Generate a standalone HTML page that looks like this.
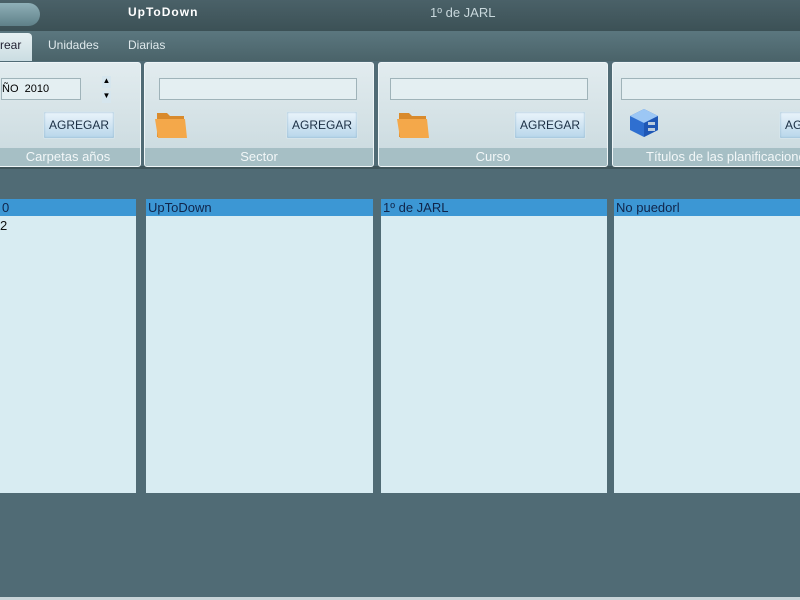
<!DOCTYPE html>
<html><head><meta charset="utf-8"><style>
*{margin:0;padding:0;box-sizing:border-box}
body{width:800px;height:600px;overflow:hidden;background:#506b75;font-family:"Liberation Sans",sans-serif;position:relative}
.a{position:absolute}
.top{left:0;top:0;width:800px;height:31px;background:linear-gradient(#4a6168,#3c5156)}
.pill{left:-20px;top:3px;width:60px;height:23px;border-radius:12px;background:linear-gradient(#8fb0b8,#5f8088)}
.tabs{left:0;top:31px;width:800px;height:30px;background:linear-gradient(#5b777f,#4a6369)}
.tab{top:34px;font-size:12px;color:#dfe9ec}
.act{left:0;top:33px;width:32px;height:28px;background:linear-gradient(#e6f0f2,#cbdde2);border-radius:0 4px 0 0}
.pan{top:62px;height:105px;background:linear-gradient(#e2ecef,#c9d9de);border:1px solid #eef5f7;border-radius:3px;overflow:hidden}
.lab{position:absolute;left:0;right:0;bottom:0;height:18px;background:#a6bfc5;color:#f2f7f8;font-size:13px;text-align:center;line-height:18px;white-space:nowrap;overflow:hidden}
.in{height:22px;background:#e4eff2;border:1px solid #9fb3b9}
.btn{width:72px;height:28px;background:linear-gradient(#eaf4fb,#b8d6ea);border:1px solid #d5e4ea;border-radius:2px;font-size:12px;color:#1b2f44;text-align:center;line-height:26px;box-shadow:0 0 2px #8fb4cc inset;white-space:nowrap;overflow:hidden}
.list{top:199px;height:294px;background:#d8ecf2}
.sel{position:absolute;left:0;right:0;top:0;height:17px;background:#3c97d4;color:#10254a;font-size:13px;line-height:17px;padding-left:2px}
.it{font-size:13px;color:#111}
.fold{width:38px;height:34px}
</style></head><body>
<div class="a top"></div>
<div class="a pill"></div>
<div class="a" style="left:128px;top:5px;font-size:12px;font-weight:bold;color:#fff;letter-spacing:1px">UpToDown</div>
<div class="a" style="left:430px;top:5px;font-size:13px;color:#c9d8dc">1º de JARL</div>
<div class="a tabs"></div>
<div class="a act"></div>
<div class="a tab" style="left:0;top:38px;color:#223">rear</div>
<div class="a tab" style="left:48px;top:38px">Unidades</div>
<div class="a tab" style="left:128px;top:38px">Diarias</div>
<div class="a" style="left:0;top:166px;width:800px;height:3px;background:#3f555b"></div>

<div class="a pan" style="left:-5px;width:146px">
 <div class="a in" style="left:5px;top:15px;width:80px;font-size:11px;line-height:20px">ÑO &nbsp;2010</div>
 <div class="a" style="left:106px;top:13px;width:9px;height:12px;background:#d6e6ee;font-size:8px;text-align:center">▲</div>
 <div class="a" style="left:106px;top:28px;width:9px;height:12px;background:#d6e6ee;font-size:8px;text-align:center">▼</div>
 <div class="a btn" style="left:47px;top:48px">AGREGAR</div>
 <div class="lab">Carpetas años</div>
</div>
<div class="a pan" style="left:144px;width:230px">
 <div class="a in" style="left:14px;top:15px;width:198px"></div>
 <svg class="a fold" style="left:8px;top:44px" viewBox="0 0 38 34"><path d="M4 6h10l3 3h14v21H4z" fill="#d98a2c"/><path d="M2 12h30l2 19H5z" fill="#f4a84a"/></svg>
 <div class="a btn" style="left:141px;top:48px">AGREGAR</div>
 <div class="lab">Sector</div>
</div>
<div class="a pan" style="left:378px;width:230px">
 <div class="a in" style="left:11px;top:15px;width:198px"></div>
 <svg class="a fold" style="left:16px;top:44px" viewBox="0 0 38 34"><path d="M4 6h10l3 3h14v21H4z" fill="#d98a2c"/><path d="M2 12h30l2 19H5z" fill="#f4a84a"/></svg>
 <div class="a btn" style="left:135px;top:48px">AGREGAR</div>
 <div class="lab">Curso</div>
</div>
<div class="a pan" style="left:612px;width:188px;border-right:none;border-radius:3px 0 0 3px">
 <div class="a in" style="left:8px;top:15px;width:190px"></div>
 <svg class="a" style="left:15px;top:44px" width="32" height="32" viewBox="0 0 32 32"><path d="M16 2l14 7v14l-14 7L2 23V9z" fill="#2f6fd0"/><path d="M2 9l14 7 14-7-14-7z" fill="#9cc7f5"/><path d="M16 16v14l14-7V9z" fill="#1f57b5"/><rect x="20" y="15" width="7" height="3" fill="#bcd"/><rect x="20" y="21" width="7" height="3" fill="#bcd"/></svg>
 <div class="a btn" style="left:166px;top:48px">AGREGAR</div>
 <div class="lab" style="text-align:left;padding-left:33px">Títulos de las planificaciones</div>
</div>

<div class="a list" style="left:0;width:136px"><div class="sel">0</div><div class="a it" style="left:0;top:19px">2</div></div>
<div class="a list" style="left:146px;width:227px"><div class="sel">UpToDown</div></div>
<div class="a list" style="left:381px;width:226px"><div class="sel">1º de JARL</div></div>
<div class="a list" style="left:614px;width:186px"><div class="sel">No puedorl</div></div>
<div class="a" style="left:0;top:597px;width:800px;height:3px;background:#c8d4d8"></div>
</body></html>
